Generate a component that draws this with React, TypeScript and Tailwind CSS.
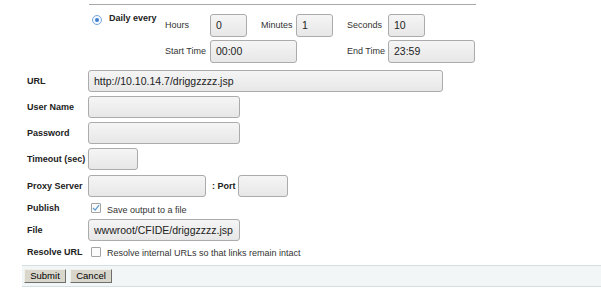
import React from 'react'

function Field({ w, value = '', h = 22 }: { w: number; value?: string; h?: number }) {
    return (
        <div
            className="flex items-center shrink-0 rounded-[3px] border border-[#ababab] bg-gradient-to-b from-[#f5f5f5] to-[#e7e7e7] pl-[5px] font-['Liberation_Sans',Arial,sans-serif] text-[10.5px] text-[#222] overflow-hidden whitespace-nowrap"
            style={{ width: w, height: h }}
        >
            {value}
        </div>
    )
}

function Check({ checked }: { checked?: boolean }) {
    return (
        <span className="relative flex items-center justify-center w-[10px] h-[10px] shrink-0 border border-[#a3a3a3] rounded-[1px] bg-[#fbfbfb]">
            {checked && (
                <svg width="8" height="8" viewBox="0 0 8 8" className="absolute">
                    <path d="M1 4 L3.2 6.2 L7 1.2" fill="none" stroke="#5b9bd5" strokeWidth="1.2" />
                </svg>
            )}
        </span>
    )
}

function Row({ label, h = 26, className = '', children }: { label: string; h?: number; className?: string; children: React.ReactNode }) {
    return (
        <div className={`flex items-center pl-[27px] ${className}`} style={{ height: h }}>
            <div className="w-[61px] shrink-0 font-bold text-[#222]">{label}</div>
            {children}
        </div>
    )
}

export default function App() {
    return (
        <div className="w-[601px] h-[298px] bg-white font-['Liberation_Sans',Arial,sans-serif] text-[9px] leading-[11px] text-[#333]">
            {/* Schedule block */}
            <div className="pt-[4px] pl-[89px]">
                <div className="w-[387px] border-t border-[#a9a9a9] flex pt-[9px]">
                    <div className="w-[76px] flex items-start -mt-[1px]">
                        <span className="ml-[3px] mt-[2px] w-[10px] h-[10px] rounded-full border border-[#7aa7d8] bg-[#f4f8fc] flex items-center justify-center shrink-0">
                            <span className="w-[4px] h-[4px] rounded-full bg-[#3d7fcf]" />
                        </span>
                        <span className="ml-[7px] font-bold text-[#222]">Daily every</span>
                    </div>
                    <div className="flex flex-col gap-[3px]">
                        <div className="flex items-center h-[23px]">
                            <span className="w-[45px]">Hours</span>
                            <Field w={37} h={23} value="0" />
                            <span className="w-[35px] ml-[14px]">Minutes</span>
                            <Field w={37} h={23} value="1" />
                            <span className="w-[41px] ml-[14px]">Seconds</span>
                            <Field w={37} h={23} value="10" />
                        </div>
                        <div className="flex items-center h-[23px]">
                            <span className="w-[45px]">Start Time</span>
                            <Field w={87} h={23} value="00:00" />
                            <span className="w-[41px] ml-[50px]">End Time</span>
                            <Field w={87} h={23} value="23:59" />
                        </div>
                    </div>
                </div>
            </div>

            {/* Form rows */}
            <div className="mt-[5px]">
                <Row label="URL">
                    <Field w={355} value="http://10.10.14.7/driggzzzz.jsp" />
                </Row>
                <Row label="User Name">
                    <Field w={152} />
                </Row>
                <Row label="Password">
                    <Field w={152} />
                </Row>
                <Row label="Timeout (sec)">
                    <Field w={50} />
                </Row>
                <Row label="Proxy Server" className="mt-[1px]">
                    <Field w={118} />
                    <span className="ml-[6px] w-[26px] font-bold text-[#222]">: Port</span>
                    <Field w={50} />
                </Row>
                <Row label="Publish" h={19}>
                    <span className="ml-[3px] -mt-[1px]"><Check checked /></span>
                    <span className="ml-[6px] mt-[3px]">Save output to a file</span>
                </Row>
                <Row label="File" h={24}>
                    <Field w={152} value="wwwroot/CFIDE/driggzzzz.jsp" />
                </Row>
                <Row label="Resolve URL" h={20}>
                    <span className="ml-[3px]"><Check /></span>
                    <span className="ml-[6px] mt-[3px]">Resolve internal URLs so that links remain intact</span>
                </Row>
            </div>

            {/* Buttons bar */}
            <div className="mt-[3px] ml-[22px] h-[22px] border-y border-[#d5e0e3] bg-[#f2f6f7] flex items-center gap-[4px] pl-[2px]">
                <button className="w-[42px] h-[14px] bg-[#d9d6cc] border border-t-[#f2f0ea] border-l-[#f2f0ea] border-r-[#6e6e6e] border-b-[#6e6e6e] text-[9.5px] leading-[12px] text-black">
                    Submit
                </button>
                <button className="w-[42px] h-[14px] bg-[#d9d6cc] border border-t-[#f2f0ea] border-l-[#f2f0ea] border-r-[#6e6e6e] border-b-[#6e6e6e] text-[9.5px] leading-[12px] text-black">
                    Cancel
                </button>
            </div>
        </div>
    )
}
